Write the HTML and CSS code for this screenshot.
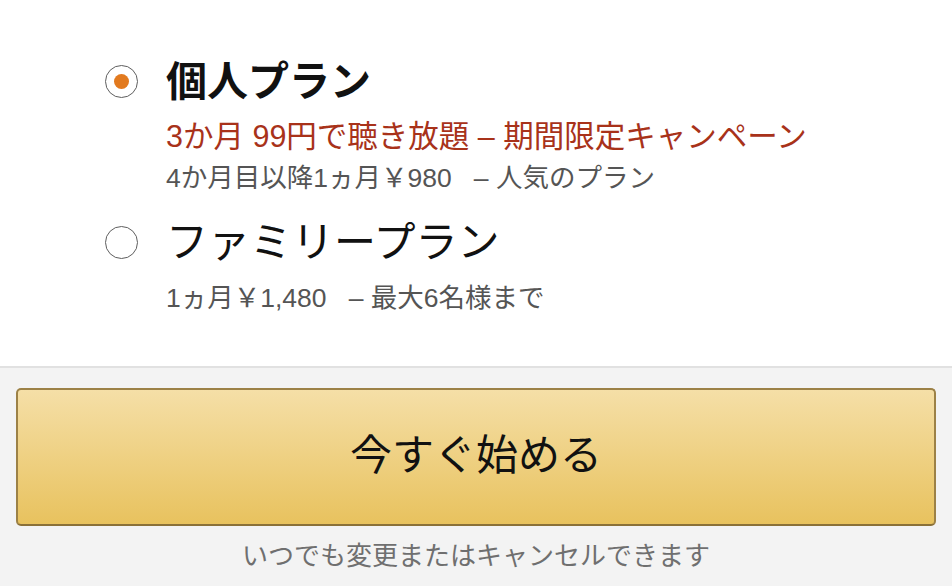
FILE: index.html
```html
<!DOCTYPE html>
<html lang="ja">
<head>
    <meta charset="UTF-8">
    <meta name="viewport" content="width=device-width, initial-scale=1.0">
    <title>プランを選択</title>
    <link rel="stylesheet" href="styles.css">
</head>
<body>
    <div class="plans">
        <label class="plan">
            <span class="radio checked"></span>
            <span class="plan-text">
                <span class="plan-name bold">個人プラン</span>
                <span class="plan-promo">3か月 99円で聴き放題 – 期間限定キャンペーン</span>
                <span class="plan-note">4か月目以降1ヵ月￥980&nbsp;&nbsp; – 人気のプラン</span>
            </span>
        </label>
        <label class="plan">
            <span class="radio"></span>
            <span class="plan-text">
                <span class="plan-name">ファミリープラン</span>
                <span class="plan-note family">1ヵ月￥1,480&nbsp;&nbsp; – 最大6名様まで</span>
            </span>
        </label>
    </div>

    <div class="footer">
        <button class="start-button">今すぐ始める</button>
        <p class="cancel-note">いつでも変更またはキャンセルできます</p>
    </div>
</body>
</html>
```

FILE: styles.css
```css
body {
    font-family: "Liberation Sans", "Noto Sans CJK JP", sans-serif;
    margin: 0;
    padding: 0;
    background: #f3f3f3;
    color: #111;
}
.plans {
    background: white;
    padding: 58px 0 50px 105px;
    border-bottom: 2px solid #e1e1e1;
}
.plan {
    display: flex;
    align-items: flex-start;
    gap: 28px;
    margin-bottom: 23px;
}
.plan:last-child {
    margin-bottom: 0;
}
.radio {
    flex: none;
    width: 31px;
    height: 31px;
    margin-top: 7px;
    border: 1.5px solid #5e5e5e;
    border-radius: 50%;
    display: flex;
    align-items: center;
    justify-content: center;
    background: white;
}
.radio.checked::after {
    content: "";
    width: 15px;
    height: 15px;
    border-radius: 50%;
    background: #e27a1f;
}
.plan-text {
    display: flex;
    flex-direction: column;
}
.plan-name {
    font-size: 42px;
    line-height: 48px;
    color: #111;
}
.plan-name.bold {
    font-size: 41px;
    font-weight: bold;
}
.plan-promo {
    font-size: 30.5px;
    line-height: 40px;
    margin-top: 10px;
    color: #a8321a;
}
.plan-note {
    font-size: 26.5px;
    line-height: 36px;
    margin-top: 4px;
    color: #555;
}
.plan-note.family {
    margin-top: 13px;
}
.footer {
    padding: 20px 16px 0;
    text-align: center;
}
.start-button {
    display: block;
    width: 100%;
    height: 138px;
    font-family: inherit;
    font-size: 42px;
    color: #111;
    background: linear-gradient(to bottom, #f5dfa7, #e8c25e);
    border: 2px solid #9c8146;
    border-bottom-color: #8a7038;
    border-radius: 5px;
    cursor: pointer;
    padding: 0 0 12px;
}
.cancel-note {
    margin: 10px 0 0;
    font-size: 26px;
    line-height: 40px;
    color: #6f6f6f;
}
```
